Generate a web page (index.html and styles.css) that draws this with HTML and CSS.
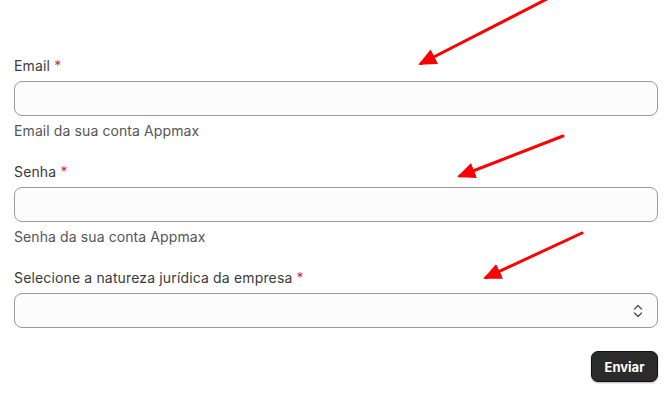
FILE: index.html
```html
<!DOCTYPE html>
<html lang="pt">
<head>
<meta charset="utf-8">
<link rel="stylesheet" href="styles.css">
</head>
<body>
<form class="form">
  <div class="field">
    <label class="label">Email <span class="req">*</span></label>
    <div class="input"></div>
    <div class="help">Email da sua conta Appmax</div>
  </div>
  <div class="field">
    <label class="label">Senha <span class="req">*</span></label>
    <div class="input"></div>
    <div class="help">Senha da sua conta Appmax</div>
  </div>
  <div class="field">
    <label class="label">Selecione a natureza jurídica da empresa <span class="req">*</span></label>
    <div class="input select">
      <svg class="chev" width="10" height="16" viewBox="0 0 10 16"><path d="M1.5 6 L5 2.5 L8.5 6 M1.5 10 L5 13.5 L8.5 10" fill="none" stroke="#555" stroke-width="1.4" stroke-linecap="round" stroke-linejoin="round"/></svg>
    </div>
  </div>
  <div class="actions">
    <button type="button" class="btn">Enviar</button>
  </div>
</form>
<svg class="arrows" width="670" height="400" viewBox="0 0 670 400">
  <defs>
    <marker id="ah" markerWidth="6" markerHeight="6" refX="5" refY="3" orient="auto" markerUnits="strokeWidth">
      <path d="M0 0.3 L6 3 L0 5.7 Z" fill="#ff0000"/>
    </marker>
  </defs>
  <g stroke="#ff0000" stroke-width="3" stroke-linecap="round" fill="none">
    <line x1="547" y1="-1" x2="421" y2="63.5" marker-end="url(#ah)"/>
    <line x1="563" y1="136" x2="460" y2="176" marker-end="url(#ah)"/>
    <line x1="582" y1="233" x2="486" y2="277.6" marker-end="url(#ah)"/>
  </g>
</svg>
</body>
</html>
```
FILE: styles.css
```css
html, body {
  margin: 0;
  padding: 0;
  background: #ffffff;
}
body {
  font-family: Inter, "Noto Sans", sans-serif;
  font-size: 14px;
  color: #3a3a3a;
  position: relative;
  width: 670px;
  height: 400px;
  overflow: hidden;
}
.form {
  padding: 56px 12px 0 14px;
  display: flex;
  flex-direction: column;
}
.field {
  display: flex;
  flex-direction: column;
  margin-bottom: 21px;
}
.label {
  line-height: 20px;
  color: #3a3a3a;
  letter-spacing: 0.15px;
  margin-bottom: 5px;
}
.req {
  color: #d32f2f;
}
.input {
  height: 33px;
  border: 1px solid #9a9a9a;
  border-radius: 8px;
  background: #fcfcfc;
  position: relative;
}
.select {
  display: flex;
  align-items: center;
  justify-content: flex-end;
  padding-right: 14px;
}
.chev {
  display: block;
}
.help {
  line-height: 20px;
  margin-top: 5px;
  color: #555;
  letter-spacing: 0.1px;
}
.actions {
  display: flex;
  justify-content: flex-end;
  margin-top: 2px;
}
.btn {
  font-family: Inter, "Noto Sans", sans-serif;
  font-weight: 700;
  font-size: 13px;
  color: #fff;
  background: #2b2b2b;
  border: 1px solid #111;
  border-radius: 7px;
  width: 67px;
  height: 31px;
  padding: 0;
  box-shadow: 0 1px 2px rgba(0,0,0,0.3);
}
.arrows {
  position: absolute;
  left: 0;
  top: 0;
  pointer-events: none;
}
```
